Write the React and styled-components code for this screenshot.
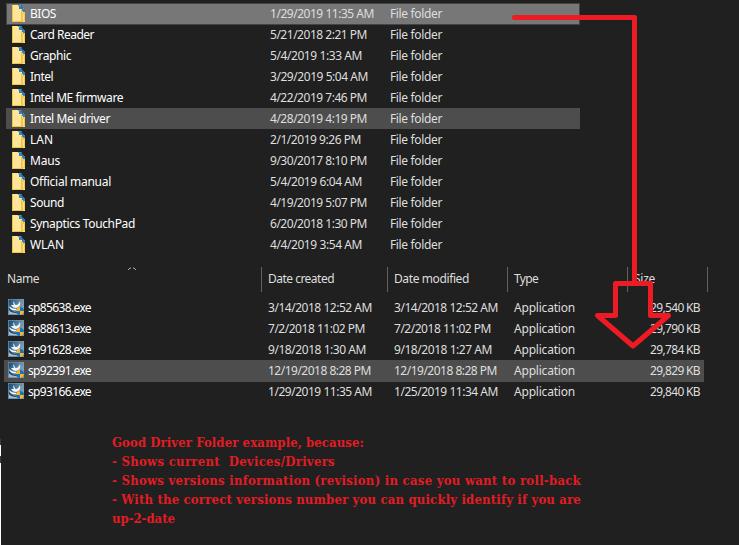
import React, { useLayoutEffect, useRef, useState } from "react";
import styled, { createGlobalStyle } from "styled-components";

const GlobalStyle = createGlobalStyle`
  body { margin: 0; background: #202020; overflow: hidden; }
  * { box-sizing: border-box; }
`;

const Screen = styled.main`
  position: relative;
  width: 739px;
  height: 545px;
  padding-top: 3px;
  background: #202020;
  color: #dedede;
  font: 12px/20px "Noto Sans", "Open Sans", sans-serif;
  overflow: hidden;
`;

const FolderList = styled.section`
  width: 574px;
  margin-left: 6px;
`;

const FolderRow = styled.div`
  display: grid;
  grid-template-columns: 24px 240px 120px 1fr;
  align-items: center;
  height: ${(p) => (p.$state === "selected" ? 22 : 21)}px;
  margin-bottom: ${(p) => (p.$state === "selected" ? -1 : 0)}px;
  padding-bottom: ${(p) => (p.$state === "selected" ? 1 : 0)}px;
  background: ${(p) =>
    p.$state === "selected" ? "#777777" : p.$state === "hover" ? "#4d4d4d" : "transparent"};
  box-shadow: ${(p) => (p.$state === "selected" ? "inset 0 0 0 1px #444" : "none")};
`;

const FolderIcon = styled.svg`
  width: 14px;
  height: 17px;
  margin-left: 6px;
`;

const FileTable = styled.section`
  width: 739px;
  margin-top: 12px;
`;

const HeaderRow = styled.div`
  display: grid;
  grid-template-columns: 262px 126px 120px 120px 80px 1fr;
  height: 25px;
`;

const HeaderCell = styled.div`
  position: relative;
  padding: 2px 0 0 ${(p) => (p.$first ? 7 : 6)}px;
  border-right: ${(p) => (p.$last ? "none" : "1px solid #626262")};
`;

const SortMark = styled.svg`
  position: absolute;
  left: 127px;
  top: 0;
  width: 10px;
  height: 4px;
`;

const FileRows = styled.div`
  margin: 5px 0 0 4px;
`;

const FileRow = styled.div`
  display: grid;
  grid-template-columns: 24px 240px 126px 120px 136px 50px;
  align-items: start;
  width: 700px;
  height: ${(p) => (p.$active ? 22 : 21)}px;
  margin-bottom: ${(p) => (p.$active ? -1 : 0)}px;
  padding-top: 1px;
  background: ${(p) => (p.$active ? "#4d4d4d" : "transparent")};
`;

const AppIcon = styled.svg`
  width: 16px;
  height: 16px;
  margin: 1px 0 0 4px;
`;

const Label = styled.span`
  display: inline-block;
  justify-self: start;
  white-space: pre;
  color: ${(p) => (p.$bright ? "#ffffff" : "inherit")};
`;

const Note = styled.section`
  display: flex;
  flex-direction: column;
  align-items: flex-start;
  margin: 31px 0 0 112px;
  color: #e31c24;
  font: bold 13px/19px "DejaVu Serif Condensed", "DejaVu Serif", serif;
`;

const Arrow = styled.svg`
  position: absolute;
  inset: 0;
  width: 739px;
  height: 545px;
`;

const Edge = styled.div`
  position: absolute;
  left: 0;
  top: 439px;
  width: 1px;
  height: 106px;
  background: linear-gradient(#3b3b3b 6px, #fff 6px 17px, #3b3b3b 17px 24px, #fff 24px);
`;

/* Tracks a label so that it fills the given width. */
function Fitted({ width, bright, children }) {
  const ref = useRef(null);
  const [spacing, setSpacing] = useState(0);
  useLayoutEffect(() => {
    const natural = ref.current.getBoundingClientRect().width;
    setSpacing((width - natural) / children.length);
  }, []);
  return (
    <Label ref={ref} $bright={bright} style={{ letterSpacing: `${spacing}px` }}>
      {children}
    </Label>
  );
}

const folders = [
  ["BIOS", 26, "1/29/2019 11:35 AM", 104, "selected"],
  ["Card Reader", 64, "5/21/2018 2:21 PM", 97],
  ["Graphic", 41, "5/4/2019 1:33 AM", 92],
  ["Intel", 23, "3/29/2019 5:04 AM", 98],
  ["Intel ME firmware", 93, "4/22/2019 7:46 PM", 97],
  ["Intel Mei driver", 80, "4/28/2019 4:19 PM", 97, "hover"],
  ["LAN", 23, "2/1/2019 9:26 PM", 91],
  ["Maus", 30, "9/30/2017 8:10 PM", 97],
  ["Official manual", 81, "5/4/2019 6:04 AM", 92],
  ["Sound", 34, "4/19/2019 5:07 PM", 97],
  ["Synaptics TouchPad", 105, "6/20/2018 1:30 PM", 97],
  ["WLAN", 34, "4/4/2019 3:54 AM", 92],
];

const files = [
  ["sp85638.exe", "3/14/2018 12:52 AM", 104, "3/14/2018 12:52 AM", 104, "29,540 KB"],
  ["sp88613.exe", "7/2/2018 11:02 PM", 97, "7/2/2018 11:02 PM", 97, "29,790 KB"],
  ["sp91628.exe", "9/18/2018 1:30 AM", 98, "9/18/2018 1:27 AM", 98, "29,784 KB"],
  ["sp92391.exe", "12/19/2018 8:28 PM", 103, "12/19/2018 8:28 PM", 103, "29,829 KB"],
  ["sp93166.exe", "1/29/2019 11:35 AM", 104, "1/25/2019 11:34 AM", 104, "29,840 KB"],
];

const noteLines = [
  ["Good Driver Folder example, because:", 252],
  ["- Shows current  Devices/Drivers", 223],
  ["- Shows versions information (revision) in case you want to roll-back", 469],
  ["- With the correct versions number you can quickly identify if you are", 469],
  ["up-2-date", 63],
];

function Folder() {
  return (
    <FolderIcon viewBox="0 0 14 17">
      <path d="M0 0h9l4 6v11H0z" fill="#ffe49b" />
      <path d="M0 0h1v16H0zM0 16h11v1H0zM9 5h1v4l1 1v6H9z" fill="#f0c43c" />
      <path d="M10 7h3v9h-3z" fill="#f3cb52" />
      <path d="M11 9h1v6h-1z" fill="#ffe08a" />
      <path d="M7 1h3v3H7zM10 4h3v3h-2V6h-1z" fill="#2d82c4" />
      <path d="M6 0h3v1H6z" fill="#6f9a9c" />
      <path d="M9 0h1v2h1v2h-1V2H9z" fill="#20669b" />
    </FolderIcon>
  );
}

function Installer() {
  return (
    <AppIcon viewBox="0 0 16 16">
      <defs>
        <linearGradient id="sky" x1="0" y1="0" x2="1" y2="0.5">
          <stop offset="0" stopColor="#0f4a78" />
          <stop offset="1" stopColor="#8ba6ba" />
        </linearGradient>
      </defs>
      <path d="M0 0h16v16H0z" fill="#8098aa" />
      <path d="M.6.6h14.8v14.8H.6z" fill="url(#sky)" />
      <path d="M1 10c2 2 4 3 8 3v2H1z" fill="#a9bac8" />
      <path d="M1 9c2 3 5 4 8 4v1c-4 0-7-1-8-3z" fill="#123c61" />
      <path d="M6 2c0 2 1 4 2 4 2 0 3-2 4-4 1 4-1 7-4 7-2 0-4-1-5-3l3 0C5 5 5 3 6 2z" fill="#f1f5f8" />
      <path d="M1 7c2 2 4 3 8 3-1 2-7 2-8-3z" fill="#fff" />
      <circle cx="12" cy="12" r="4" fill="#1674bf" />
      <path d="M12 8v4H8c0-2 1-4 4-4zM12 12h4c0 2-2 4-4 4z" fill="#ffb72a" />
    </AppIcon>
  );
}

export default function App() {
  return (
    <>
      <GlobalStyle />
      <Screen>
        <FolderList>
          {folders.map(([name, nameWidth, date, dateWidth, state]) => (
            <FolderRow key={name} $state={state}>
              <Folder />
              <Fitted width={nameWidth} bright>{name}</Fitted>
              <Fitted width={dateWidth}>{date}</Fitted>
              <Fitted width={52}>File folder</Fitted>
            </FolderRow>
          ))}
        </FolderList>
        <FileTable>
          <HeaderRow>
            <HeaderCell $first>
              <SortMark viewBox="0 0 10 4">
                <path d="M1 3l2-2 1 0M6 1l1 0 2 2" fill="none" stroke="#aaa" />
              </SortMark>
              <Fitted width={32}>Name</Fitted>
            </HeaderCell>
            <HeaderCell><Fitted width={66}>Date created</Fitted></HeaderCell>
            <HeaderCell><Fitted width={75}>Date modified</Fitted></HeaderCell>
            <HeaderCell><Fitted width={24}>Type</Fitted></HeaderCell>
            <HeaderCell><Fitted width={21}>Size</Fitted></HeaderCell>
            <HeaderCell $last />
          </HeaderRow>
          <FileRows>
            {files.map(([name, created, createdWidth, modified, modifiedWidth, size], i) => (
              <FileRow key={name} $active={i === 3}>
                <Installer />
                <Fitted width={63} bright>{name}</Fitted>
                <Fitted width={createdWidth}>{created}</Fitted>
                <Fitted width={modifiedWidth}>{modified}</Fitted>
                <Fitted width={61}>Application</Fitted>
                <Fitted width={50}>{size}</Fitted>
              </FileRow>
            ))}
          </FileRows>
        </FileTable>
        <Note>
          {noteLines.map(([text, width]) => (
            <Fitted key={text} width={width}>{text}</Fitted>
          ))}
        </Note>
        <Arrow viewBox="0 0 739 545">
          <g fill="none" stroke="#ed1c24" strokeWidth="5" strokeLinejoin="round" strokeLinecap="round">
            <path d="M514.5 17.5H634.5V283" />
            <path d="M615.5 283.5H650.5V315.5H668.5L633 346L597.5 315.5H615.5Z" />
          </g>
        </Arrow>
        <Edge />
      </Screen>
    </>
  );
}
